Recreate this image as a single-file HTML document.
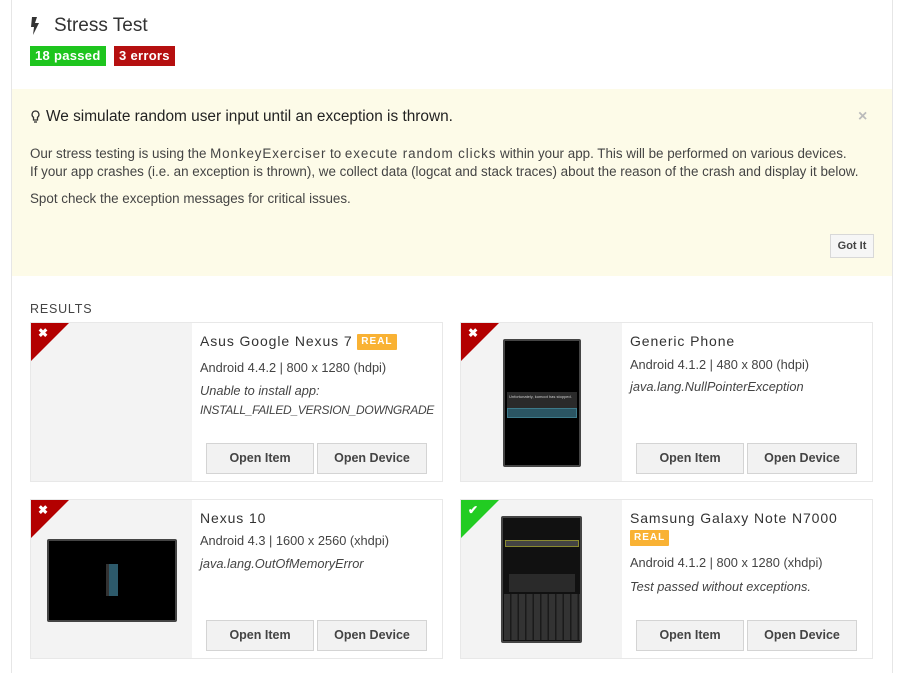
<!DOCTYPE html>
<html><head><meta charset="utf-8"><style>
*{box-sizing:border-box;margin:0;padding:0}
body{width:908px;height:673px;background:#fff;font-family:"Liberation Sans",sans-serif;color:#333;position:relative;overflow:hidden}
.a{position:absolute}
.vl{position:absolute;top:0;bottom:0;width:1px;background:#e6e6e6}
.badge{position:absolute;top:46px;height:20px;color:#fff;font-weight:bold;font-size:13px;line-height:20px;padding:0 5px;letter-spacing:.3px}
.yel{position:absolute;left:12px;top:89px;width:880px;height:187px;background:#fdfbe8}
.p{font-size:13.4px;color:#444;position:absolute;left:30px;white-space:nowrap}
.mono{letter-spacing:.9px}
.card{position:absolute;width:413px;height:160px;border:1px solid #e8e8e8;background:#fff}
.img{position:absolute;left:0;top:0;width:161px;height:158px;background:#f3f3f3}
.tri{position:absolute;left:0;top:0;width:0;height:0;border-top:38px solid #b30000;border-right:38px solid transparent}
.tri.g{border-top-color:#22cc22}
.ic{position:absolute;left:7px;top:3px;color:#fff;font-weight:bold;font-size:12px}
.t{position:absolute;left:169px;font-size:14px;color:#333;letter-spacing:.9px;white-space:nowrap}
.s{position:absolute;left:169px;font-size:12.8px;color:#444;white-space:nowrap}
.i{position:absolute;left:169px;font-size:12.8px;color:#444;font-style:italic;white-space:nowrap;line-height:19px}
.real{display:inline-block;background:#f9b234;color:#fff;font-size:10px;font-weight:bold;letter-spacing:1px;padding:0 4px;height:16px;line-height:16px;vertical-align:2px;border-radius:1px}
.btn{position:absolute;top:120px;height:31px;border:1px solid #d4d4d4;background:#f2f2f2;font-size:12.5px;font-weight:bold;color:#444;text-align:center;line-height:29px}
.b1{left:175px;width:108px}.b2{left:286px;width:110px}
.ph{position:absolute;background:#000;border:2px solid #444;border-radius:2px}
</style></head><body>
<div class="vl" style="left:11px"></div><div class="vl" style="left:892px"></div>

<svg class="a" style="left:30px;top:17px" width="10" height="18" viewBox="0 0 10 18"><path d="M2 0h5L5 6h4L3 18l1-8H1z" fill="#333"/></svg>
<div class="a" style="left:54px;top:15px;font-size:19px;color:#333">Stress Test</div>
<div class="badge" style="left:30px;background:#1ec51e">18 passed</div>
<div class="badge" style="left:114px;background:#b50f0f">3 errors</div>

<div class="yel"></div>
<svg class="a" style="left:31px;top:110px" width="9" height="14" viewBox="0 0 9 14"><path d="M4.5 1a3.5 3.5 0 0 0-2 6.3V10h4V7.3A3.5 3.5 0 0 0 4.5 1z" fill="none" stroke="#333" stroke-width="1.3"/><path d="M3 12h3" stroke="#333" stroke-width="1.3"/></svg>
<div class="p" style="top:108px;left:46px;font-size:15.4px;color:#222">We simulate random user input until an exception is thrown.</div>
<div class="a" style="left:858px;top:108px;color:#bbb;font-size:16px;font-weight:bold">×</div>
<div class="p" style="top:146px">Our stress testing is using the <span class="mono">MonkeyExerciser</span> to <span class="mono">execute random clicks</span> within your app. This will be performed on various devices.</div>
<div class="p" style="top:164px">If your app crashes (i.e. an exception is thrown), we collect data (logcat and stack traces) about the reason of the crash and display it below.</div>
<div class="p" style="top:191px">Spot check the exception messages for critical issues.</div>
<div class="a" style="left:830px;top:234px;width:44px;height:24px;border:1px solid #d8d8d8;background:#f6f6f6;font-size:11px;font-weight:bold;color:#444;text-align:center;line-height:22px">Got It</div>

<div class="a" style="left:30px;top:302px;font-size:12.5px;letter-spacing:.8px;color:#444">RESULTS</div>

<div class="card" style="left:30px;top:322px">
 <div class="img"></div><div class="tri"></div><div class="ic">✖</div>
 <div class="t" style="top:10px">Asus Google Nexus 7 <span class="real">REAL</span></div>
 <div class="s" style="top:37px">Android 4.4.2 | 800 x 1280 (hdpi)</div>
 <div class="i" style="top:58px">Unable to install app:<br><span style="font-size:12px;letter-spacing:-.3px">INSTALL_FAILED_VERSION_DOWNGRADE</span></div>
 <div class="btn b1">Open Item</div><div class="btn b2">Open Device</div>
</div>

<div class="card" style="left:460px;top:322px">
 <div class="img"></div><div class="tri"></div><div class="ic">✖</div>
 <div class="ph" style="left:42px;top:16px;width:78px;height:128px">
  <div class="a" style="left:2px;top:51px;width:70px;height:16px;background:#2a2a2a;color:#ccc;font-size:4px;padding:2px">Unfortunately, komoot has stopped.</div>
  <div class="a" style="left:2px;top:67px;width:70px;height:10px;background:#2b5563;border:1px solid #3d7a8a"></div>
 </div>
 <div class="t" style="top:10px">Generic Phone</div>
 <div class="s" style="top:34px">Android 4.1.2 | 480 x 800 (hdpi)</div>
 <div class="i" style="top:54px">java.lang.NullPointerException</div>
 <div class="btn b1">Open Item</div><div class="btn b2">Open Device</div>
</div>

<div class="card" style="left:30px;top:499px">
 <div class="img"></div><div class="tri"></div><div class="ic">✖</div>
 <div class="ph" style="left:16px;top:39px;width:130px;height:83px">
  <div class="a" style="left:57px;top:23px;width:12px;height:32px;background:#2d5a6b;border-left:3px solid #333"></div>
 </div>
 <div class="t" style="top:10px">Nexus 10</div>
 <div class="s" style="top:33px">Android 4.3 | 1600 x 2560 (xhdpi)</div>
 <div class="i" style="top:54px">java.lang.OutOfMemoryError</div>
 <div class="btn b1">Open Item</div><div class="btn b2">Open Device</div>
</div>

<div class="card" style="left:460px;top:499px">
 <div class="img"></div><div class="tri g"></div><div class="ic">✔</div>
 <div class="ph" style="left:40px;top:16px;width:81px;height:127px;background:#111">
  <div class="a" style="left:2px;top:22px;width:74px;height:7px;background:#444;border:1px solid #8a8a30"></div>
  <div class="a" style="left:6px;top:56px;width:66px;height:18px;background:#2a2a2a"></div>
  <div class="a" style="left:1px;top:76px;width:76px;height:46px;background:repeating-linear-gradient(90deg,#333 0 6px,#1a1a1a 6px 7.5px)"></div>
 </div>
 <div class="t" style="top:10px">Samsung Galaxy Note N7000</div>
 <div class="t" style="top:29px"><span class="real">REAL</span></div>
 <div class="s" style="top:55px">Android 4.1.2 | 800 x 1280 (xhdpi)</div>
 <div class="i" style="top:77px">Test passed without exceptions.</div>
 <div class="btn b1">Open Item</div><div class="btn b2">Open Device</div>
</div>
</body></html>
